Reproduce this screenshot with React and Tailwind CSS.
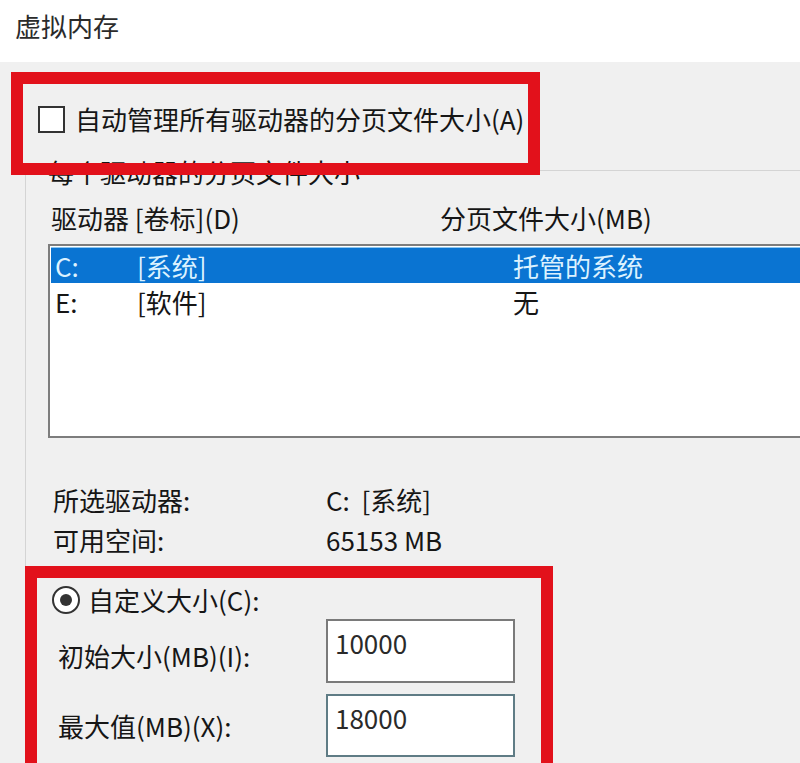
import React from "react";

const font = { fontFamily: '"Noto Sans CJK SC", "Noto Sans", sans-serif' };

const drives = [
  { letter: "C:", label: "[系统]", size: "托管的系统", selected: true },
  { letter: "E:", label: "[软件]", size: "无" },
];

const Field = ({ value, focused }) => (
  <div
    className={`w-[189px] bg-white border-2 ${
      focused ? "border-[#5f7c85] h-[63px]" : "border-[#7a7a7a] h-[64px]"
    } pl-[7px] pt-[7px] text-[26px] leading-[30px] text-[#2a2a2a]`}
  >
    {value}
  </div>
);

export default function App() {
  return (
    <div
      className="relative w-[800px] h-[763px] overflow-hidden bg-[#f0f0f0] text-[#161616]"
      style={font}
    >
      {/* Title bar */}
      <div className="h-[62px] bg-white pl-[15px] pt-[9px] text-[26px] leading-[34px] text-[#2b2b2b]">
        虚拟内存
      </div>

      {/* Auto manage checkbox */}
      <div className="mt-[43px] ml-[38px] flex items-center gap-[10px] h-[28px]">
        <div className="w-[27px] h-[27px] border-2 border-[#333] bg-white" />
        <span className="text-[26px] leading-[30px]">自动管理所有驱动器的分页文件大小(A)</span>
      </div>

      {/* Annotation box 1 */}
      <div className="absolute left-[11px] top-[72px] w-[529px] h-[103px] border-[12px] border-[#e2111b] z-10" />

      {/* Group box */}
      <div className="relative mt-[37px] ml-[25px] w-[800px] border-l border-t border-[#d4d4d4]">
        <div className="absolute -top-[14px] left-[20px] bg-[#f0f0f0] px-[2px] text-[26px] leading-[30px]">
          每个驱动器的分页文件大小
        </div>

        <div className="pt-[32px] pl-[25px] flex text-[26px] leading-[30px]">
          <span className="w-[389px]">驱动器 [卷标](D)</span>
          <span>分页文件大小(MB)</span>
        </div>

        {/* Drive list */}
        <div className="mt-[11px] ml-[22px] w-[800px] h-[194px] border-2 border-[#7d7d7d] bg-white pt-[1px] pl-[1px]">
          {drives.map((d) => (
            <div
              key={d.letter}
              className={`flex items-center h-[36px] pl-[4px] text-[26px] ${
                d.selected
                  ? "bg-[#0a74d2] text-[#dcf2ff] border-t border-[#8cc8f2]"
                  : "text-[#161616]"
              }`}
            >
              <span className="w-[82px]">{d.letter}</span>
              <span className="w-[376px]">{d.label}</span>
              <span>{d.size}</span>
            </div>
          ))}
        </div>

        {/* Selected drive info */}
        <div className="mt-[42px] pl-[27px] text-[26px] leading-[40px]">
          <div className="flex">
            <span className="w-[273px]">所选驱动器:</span>
            <span>C:&nbsp;&nbsp;[系统]</span>
          </div>
          <div className="flex">
            <span className="w-[273px]">可用空间:</span>
            <span>65153 MB</span>
          </div>
        </div>

        {/* Annotation box 2 with custom size */}
        <div className="mt-[6px] -ml-[1px] w-[528px] h-[260px] border-[12px] border-[#e2111b] pl-[15px] pt-[8px]">
          <div className="flex items-center gap-[8px] h-[28px]">
            <div className="w-[28px] h-[28px] rounded-full border-2 border-[#333] bg-white flex items-center justify-center">
              <div className="w-[12px] h-[12px] rounded-full bg-[#333]" />
            </div>
            <span className="text-[26px] leading-[30px]">自定义大小(C):</span>
          </div>

          <div className="mt-[5px] flex items-start">
            <span className="w-[268px] ml-[6px] mt-[22px] text-[26px] leading-[30px]">初始大小(MB)(I):</span>
            <Field value="10000" />
          </div>

          <div className="mt-[11px] flex items-start">
            <span className="w-[268px] ml-[6px] mt-[17px] text-[26px] leading-[30px]">最大值(MB)(X):</span>
            <Field value="18000" focused />
          </div>
        </div>
      </div>
    </div>
  );
}
